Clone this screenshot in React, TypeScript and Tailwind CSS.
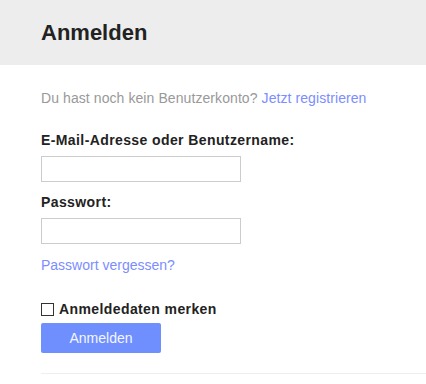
export default function App() {
  return (
    <div className="w-[426px] h-[384px] bg-white overflow-hidden" style={{ fontFamily: '"Liberation Sans", Arial, sans-serif' }}>
      <div className="h-[65px] bg-[#ededed] flex items-center px-[41px]">
        <h1 className="text-[22px] font-bold text-[#222] leading-none mt-[1px]">Anmelden</h1>
      </div>
      <div className="pl-[41px] pt-[25px]">
        <p className="text-[14px] leading-[16px] text-[#999] tracking-[0.08px]">
          Du hast noch kein Benutzerkonto? <a className="text-[#7b8dff]">Jetzt registrieren</a>
        </p>
        <label className="block mt-[26px] text-[14px] leading-[16px] font-bold text-[#222] tracking-[0.4px]">E-Mail-Adresse oder Benutzername:</label>
        <input className="block mt-[8px] w-[200px] h-[26px] border border-[#ccc] outline-none" />
        <label className="block mt-[12px] text-[14px] leading-[16px] font-bold text-[#222] tracking-[0.4px]">Passwort:</label>
        <input type="password" className="block mt-[8px] w-[200px] h-[26px] border border-[#ccc] outline-none" />
        <a className="block mt-[13px] text-[14px] leading-[16px] text-[#7b8dff]">Passwort vergessen?</a>
        <div className="flex items-center mt-[28px] gap-[5px]">
          <span className="w-[13px] h-[13px] border border-[#333] bg-white" />
          <span className="text-[14px] leading-[16px] font-bold text-[#222] tracking-[0.4px]">Anmeldedaten merken</span>
        </div>
        <button className="block mt-[6px] w-[120px] h-[30px] rounded-[2px] bg-[#6f8fff] text-[#f4f6ff] text-[14px]">Anmelden</button>
        <div className="mt-[20px] h-px bg-[#eee]" />
      </div>
    </div>
  );
}
